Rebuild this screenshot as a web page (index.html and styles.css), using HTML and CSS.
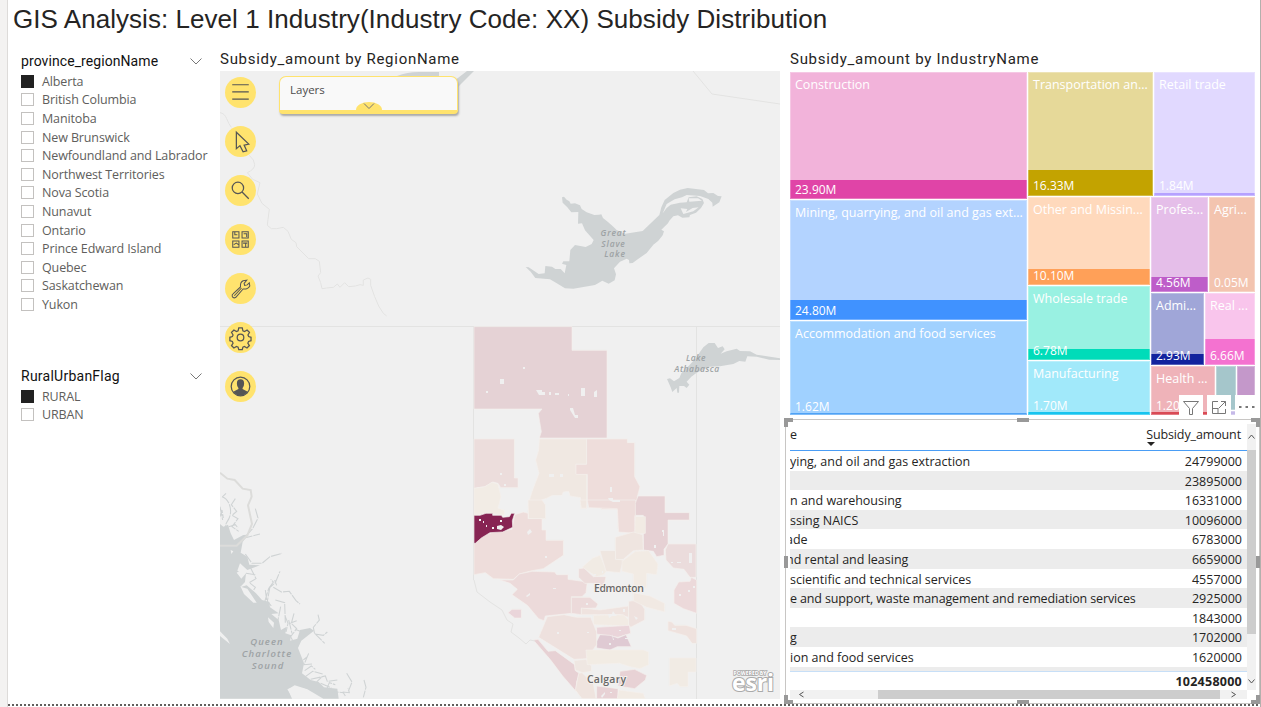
FILE: index.html
```html
<!DOCTYPE html>
<html lang="en">
<head>
<meta charset="utf-8">
<title>GIS Analysis</title>
<link rel="stylesheet" href="styles.css">
</head>
<body>
<div class="report">
<h1 class="report-title">GIS Analysis: Level 1 Industry(Industry Code: XX) Subsidy Distribution</h1>
<div class="columns">
<aside class="slicers">
  <section class="slicer slicer-province">
    <header class="slicer-head"><span class="prov-label">province_regionName</span><svg class="chev" viewBox="0 0 12 7"><path d="M.5.5 6 6 11.5.5"/></svg></header>
    <ul class="options">
      <li><i class="box on"></i>Alberta</li><li><i class="box"></i>British Columbia</li><li><i class="box"></i>Manitoba</li><li><i class="box"></i>New Brunswick</li><li><i class="box"></i>Newfoundland and Labrador</li><li><i class="box"></i>Northwest Territories</li><li><i class="box"></i>Nova Scotia</li><li><i class="box"></i>Nunavut</li><li><i class="box"></i>Ontario</li><li><i class="box"></i>Prince Edward Island</li><li><i class="box"></i>Quebec</li><li><i class="box"></i>Saskatchewan</li><li><i class="box"></i>Yukon</li>
    </ul>
  </section>
  <section class="slicer">
    <header class="slicer-head"><span class="flag-label">RuralUrbanFlag</span><svg class="chev" viewBox="0 0 12 7"><path d="M.5.5 6 6 11.5.5"/></svg></header>
    <ul class="options"><li><i class="box on"></i>RURAL</li><li><i class="box"></i>URBAN</li></ul>
  </section>
</aside>

<section class="map-visual">
  <h2 class="visual-title">Subsidy_amount by RegionName</h2>
  <div class="map">
    <svg class="map-canvas" viewBox="220 71 560 628">
      <!-- provincial borders -->
      <g class="border">
        <path d="M220 326.5H780M473.5 326V580M696.500 326V699"/>
        <path d="M693 71 712 94 780 104"/>
        <g transform="translate(210 60) scale(.33333)"><path d="M30 158q14 2 20 18t14 26M118 286q16 14 16 28t-22 24q8 10 16 20l22 10-8 34 14 28 22 18-4 30-2 18 12 10h16l20-4 14 12 10 24 14 10 2 12 36 36h20l12 8 4 34-8 10 8 20 4 18 14-2 20-2 12-10 8 10 14-14 12 12 20-2 14-4 10 2v-16l14-6 8 4v18l12 34 12 28 14 22 10 8"/></g>
      </g>
      <!-- northern lakes -->
      <path class="water" d="M397 76q10-4 22-4h20v8h-42ZM467 71h7l-16 16-4-6Z"/>
      <g transform="translate(500 60) scale(.33333)">
        <path class="water" d="M186 412 192 410 200 419 208 424 212 431 225 430 240 436 245 447 260 457 283 465 297 464 304 463 309 474 324 486 340 500 350 510 376 521 428 513 478 465 484 442 494 420 520 399 540 389 563 384 612 390 624 400 640 399 654 408 665 409 658 427 638 440 637 428 625 417 600 408 560 405 546 412 524 418 500 432 488 460 500 444 512 434 540 428 560 427 566 412 590 409 607 417 612 429 603 444 588 458 570 465 568 472 547 473 534 466 520 469 508 482 504 490 484 509 492 514 488 526 475 542 460 554 440 579 410 600 398 609 388 610 387 600 380 596 360 605 342 625 348 643 344 661 326 671 307 662 285 675 220 686 195 685 174 672 150 658 106 654 92 635 77 621 86 622 116 642 134 640 136 618 156 620 166 627 182 627 194 640 199 615 186 611 190 604 208 604 211 570 225 555 257 561 275 552 281 540 255 511 246 490 234 491 235 456 214 457 202 442 188 428Z"/>
        <path class="lakehole" d="m566 415 28 0 12 7-38 3ZM542 445l20 2-4 9 20-12 18-2-16 12-30 8Z"/>
      </g>
      <g transform="translate(470 320) scale(.33333)"><path class="water" d="M591 177 600 175 612 184 628 174 634 160 658 136 678 114 690 96 700 82 716 69 734 69 744 84 758 79 764 88 752 101 770 94 800 86 810 93 840 94 860 104 930 115V120L898 119 860 110 832 109 826 125 808 123 790 132 750 139 718 140 680 158 664 170 650 185 658 194 650 204 642 198 628 198 627 218 622 218 620 204 607 216 602 202Z"/></g>
      <!-- Pacific coast -->
      <g transform="translate(210 400) scale(.33333)">
        <path class="water" d="M30 372 40 380 54 374 62 400 72 420 100 405 114 404 98 426 92 458 112 470 118 494 150 496 112 510 90 490 82 512 108 520 105 546 90 562 110 556 138 580 156 600 178 606 180 622 206 640 184 642 206 660 213 690 230 680 226 700 244 706 240 722 262 716 270 690 300 684 312 692 274 722 264 744 282 790 276 820 302 840 326 846 342 862 382 866 386 896H340L292 868 254 856 234 868 246 896H30Z"/>
        <path class="inlet" d="M36 290q18 6 24 30t-8 44 8 40M30 350l6-20 4 24M48 280l-10 10M76 296l-12 18 16 20-14 12 18 10-18 24 20 14M56 380l20-6 8 10M136 326l8 28-16 32-26 28 48-12M30 320l8 40M106 462l20 28 30 0 24-20 36-10M120 500l18 36-20 12 18 14-12 20M108 520l28 4M164 606l12-40 20-18 14-34M176 566l14-20-8-8M170 600l-4-30M200 556l-6-16M190 562l24 14 24-2 20 28 12 10M180 560l-8 44 12 14M196 600l28 8 2 60M212 620l-8 40M252 640l-8 30 16 16-18 24 12 24M236 660l10 40M226 650l8 20-6 26M240 670l20-8M256 688l14 6M324 644l4 16-18 22 4 20 26 4 12-10M314 700l30 30M296 760l-14 34 24-2M280 780l12-10M284 812l20-14 12 10M286 830l22-16 30 8M302 838l44-10 6 16 30-4M320 846l14-14M332 850l32 14M350 868l8-20 18 6M410 820l16 26-10 26M398 876l20 2-4-14M462 840l6 22-8 30M356 874l44 4 6 10"/>
        <path class="island" d="M92 560l20 6 28 42-10 0-28-26ZM80 518l16-10 12 12-14 16ZM174 652l18 16-2 16-14-18ZM232 868l20-8 38 8 30 28h-70ZM30 694l22 22 8 16-30-24ZM62 450l8 4-6 8Z"/>
        <path class="coast" d="M30 218 52 236 74 240 98 266 122 270 125 290 114 316 126 372 112 406 80 437H30"/>
      </g>
      <!-- census divisions, north -->
      <g class="regions" transform="translate(470 320) scale(.33333)">
        <path fill="#e5d2d5" d="M12 20H306V91H411V354H208L214 335 208 300 205 280 216 267H12Z"/>
        <path fill="#ecdddc" d="M12 357H133V474H144V503H92L84 490 68 486 45 500 12 505Z"/>
        <path fill="#f2ece5" d="M12 505 45 500 66 487 84 492 93 530 84 565 104 571 102 586 72 582 58 578 12 586Z"/>
        <path fill="#f0e8e2" d="M208 357H350V432H318V462H350V566H332V533L300 528 296 514 280 516 276 526 248 526 230 535 214 540 224 560 226 596 206 600 176 595 174 555 186 515 207 460 197 420 206 390Z"/>
        <path fill="#eedddb" d="M350 357H472V368H494V470L510 500 502 530 508 554 496 570 500 640 480 634 444 625V568H394V546H352V463H318V433H350Z"/>
      </g>
      <!-- census divisions, central and south -->
      <g class="regions" transform="translate(460 500) scale(.33333)">
        <path fill="#f0e7e1" d="M204 0H246L256 14V55H206ZM360 0H380V24H364Z"/>
        <path fill="#eedddb" d="M382 0H526L536 20 524 50 526 100 476 96 472 26 386 23Z"/>
        <path fill="#e6d1d4" d="M534-12H615V38H688V60H624V132L612 148V166L590 170 580 154 550 150V46H526V10Z"/>
        <path fill="#ebdcdc" d="M624 132H708V232H690L672 208 640 204 618 180 616 150Z"/>
        <path fill="#f2ebe4" d="M526 50H556V100L524 104Z"/>
        <path fill="#efe5e0" d="M466 112 520 96 548 104 550 150 520 152 490 178H466Z"/>
        <path fill="#eedddb" d="M42 132 60 110 96 98 156 88 164 44 190 36 204 40V56H246V90H258V121H310V166L250 206 216 212 178 222 160 238 100 236 76 218 42 224Z"/>
        <path fill="#872453" d="M42 46H60L78 40H98V46H124L128 52 148 50 154 40 164 40 157 62 158 82 128 96 90 98 64 114 46 130H42Z"/>
        <path fill="#ecdada" d="M120 240 160 240 178 222 216 214 284 216 290 224H324V238L382 246 378 278 366 290 334 290V340L256 348 252 362 236 356 202 316 156 284 172 268 150 250Z"/>
        <path fill="#f1ebe4" d="M366 202 398 174 420 166 440 212 432 224 410 230Z"/><path fill="#efe6e0" d="M420 152H466V178L490 180 480 218 438 214Z"/><path fill="#f2ebe4" d="M486 184 526 154 566 152 594 192 590 224 560 220V264L520 262V222L486 214Z"/>
        <path fill="#ecdcdb" d="M356 206 372 204 400 230 438 230 430 266 400 250H374L356 232Z"/>
        <path fill="#ecdada" d="M334 292 390 292 414 312 408 324 364 326V344L334 340Z"/><path fill="#efe3df" d="M364 324 420 330 506 318V352L480 344H364Z"/>
        <path fill="#eee1de" d="M506 304 536 300 554 328V360L512 382 506 374Z"/><path fill="#f2ebe4" d="M400 346 490 344 506 360V378L400 374Z"/><path fill="#f1e9e3" d="M520 278 570 288 614 310V336L560 322 520 302Z"/>
        <path fill="#ecd9da" d="M642 270 656 246 690 244 694 232 710 240V340L670 326 642 310Z"/>
        <path fill="#efe2de" d="M624 364 636 366 644 376H678L710 386V430H696L680 408 624 392Z"/>
        <path fill="#ead5da" d="M410 382 508 376 512 400 474 412 410 402Z"/><path fill="#dfcad3" d="M410 424 420 404 450 406 474 414 498 404 514 440 472 440 450 450 410 444Z"/>
        <path fill="#ead5da" d="M144 338 156 328 184 328V354H164Z"/>
        <path fill="#eee1de" d="M236 412 262 350 312 344 350 352 392 352 410 396V434L380 476 342 478Z"/>
        <path fill="#e7d1d4" d="M220 420 234 418 264 454 286 452 344 494 346 512 358 520 350 546 348 574 308 528 272 480Z"/>
        <path fill="#efe7e2" d="M342 482 378 478 394 498V514L368 518 346 510Z"/><path fill="#f2ece4" d="M378 450H550L566 456V494L540 506 510 500 478 490 382 494Z"/>
        <path fill="#e8d2d5" d="M480 514 524 508 560 526 556 540 524 566 474 558Z"/><path fill="#f1ebe4" d="M628 474H708V516H684V560H660L652 550 628 558Z"/>
        <path fill="#efe4df" d="M356 520 366 518 400 550 408 596H366L346 570Z"/><path fill="#e8d2d5" d="M410 558 474 566V596H410Z"/><path fill="#f2ebe4" d="M476 570 550 580 556 596H472Z"/>
      </g>
      <!-- enclaves inside the divisions -->
      <path class="enclave" d="M500 379h4v5h-4ZM523 367h2v2h-2ZM536 390h6v2h3v3h-6ZM549 392h2v3h-2ZM555 393h4v2h-4ZM568 394h1v2h-1ZM581 388h4v8h-4ZM594 392l3-2v7h-3ZM570 408h3l2 7h3v3h-3l-5-8ZM549 474h5v3h-5ZM560 474h3v3h-3ZM608 498h5v2h7v2h-7l-4-2ZM610 487h2v5h-2ZM486 391h2v2h-2ZM500 473h2v2h-2ZM504 484h2v2h-2ZM479 519h2v2h-2ZM483 521h1v2h-1ZM486 525h1v2h-1ZM492 527h2v2h-2ZM500 520h2v2h-2ZM497 526l4-1 3 2-3 3-4-1ZM527 532l3-3 2 3-4 3ZM545 556h2v2h-2ZM553 588h3v1h-3ZM526 596l4-3v2l-3 2ZM662 530h2v6h-1v-4h-1ZM654 545h2v3h-2ZM689 553h3v10h-3ZM671 562h2v1h-2ZM677 562h4v1h-4ZM687 579h2v2h-2ZM688 590h2v2h-2ZM693 586h2v2h-2ZM679 594h2v2h-2ZM602 571h1v2h-1ZM607 576h2v2h-2ZM594 574h2v1h-2ZM586 603h2v2h-2ZM608 614h4l1-3 2 3 2 2h-5l-3 2ZM634 616l4 2-2 2ZM619 630h2v1h-2ZM609 643h2v2h-2ZM625 638h3v1h-3ZM612 634l2 6h-1ZM587 632h2v1h-2ZM557 632h2v2h-2ZM623 609h2v3h-2ZM672 628h4v2h-4ZM601 696l4-4v2l-3 4ZM610 692h2v1h-2Z"/>
      <path class="border" d="M474 580l3 12 13 10 12 8 5 10 6 4-2 8 8 6 7 6 4-4 5 1"/>
      <g class="lake-label"><text x="613.500" y="236">Great</text><text x="613.500" y="247">Slave</text><text x="615" y="257">Lake</text></g>
      <g class="lake-label lake-small"><text x="696" y="361">Lake</text><text x="697" y="372">Athabasca</text></g>
      <g class="lake-label sea-label"><text x="267" y="645">Queen</text><text x="267" y="657">Charlotte</text><text x="268" y="669">Sound</text></g>
      <g class="city"><text x="619" y="592" textLength="50">Edmonton</text><text x="606.500" y="683" textLength="39">Calgary</text></g>
      <g class="esri"><text class="powered" x="750" y="675" textLength="33">POWERED BY</text><text class="brand" x="753" y="691" textLength="42">esri</text></g>
    </svg>
    <nav class="tools">
      <span class="tool"><svg viewBox="0 0 30 30"><path d="M7 7.500H23M7 14.500H23M7 21.500H23"/></svg></span>
      <span class="tool"><svg viewBox="0 0 30 30"><path d="M11 6V22L14.500 19 17.500 25 21 24 18.500 18.500 23 17.500Z"/></svg></span>
      <span class="tool"><svg viewBox="0 0 30 30"><circle cx="12.500" cy="12.500" r="5.500"/><path d="M16.500 16.500 23 23"/></svg></span>
      <span class="tool"><svg class="thin" viewBox="0 0 30 30"><path d="M7.500 7.500h6v6h-6ZM16.500 7.500h6v6h-6ZM7.500 16.500h6v6h-6ZM16.500 16.500h6v6h-6ZM9.500 8v2.500h2.500M18 9.500h3v3M8.500 20l2.500-1.500 2 1.500M17.500 18.500h4M20 19v3"/></svg></span>
      <span class="tool"><svg class="thin" viewBox="0 0 30 30"><path d="M17.500 15.500 10.500 23.500Q8 25 7 22.500 6.500 21 8 20L15 13.500Q14.500 9 17.500 7.500L21 7 18.500 10 19 12 21.500 11.500 23.500 9.500 24 12.500Q22 16 17.500 15.500ZM9 22 16 14.500"/></svg></span>
      <span class="tool"><svg viewBox="0 0 30 30"><circle cx="15" cy="15" r="3.200"/><path d="M13.300 5.800h3.400l.6 2.800 1.600.7 2.500-1.500 2.300 2.300-1.500 2.500.7 1.500 2.300.7v3.300l-2.400.7-.7 1.600 1.500 2.400-2.300 2.300-2.500-1.500-1.500.7-.6 2.500h-3.400l-.6-2.500-1.600-.7-2.500 1.500-2.300-2.300 1.500-2.400-.7-1.600-2.400-.7v-3.300l2.400-.7.7-1.500-1.500-2.500 2.300-2.300 2.500 1.500 1.600-.7Z"/></svg></span>
      <span class="tool"><svg viewBox="0 0 30 30"><circle cx="15" cy="15" r="9"/><path class="solid" d="M11.500 12q0-4 3.500-4t3.500 4q0 3-1.500 4.500v1l5 2.500Q19 24 15 24t-7-4l5-2.500v-1q-1.500-1.500-1.500-4.500Z"/></svg></span>
    </nav>
    <div class="layers"><span>Layers</span><i class="tab"><svg viewBox="0 0 12 7"><path d="M1 .5 6 5.500 11 .5"/></svg></i></div>
  </div>
</section>

<div class="right">
<section class="tree-visual">
  <h2 class="visual-title industry">Subsidy_amount by IndustryName</h2>
  <div class="treemap">
    <div class="tcol main">
      <div class="tile construction"><span>Construction</span><b>23.90M</b></div>
      <div class="tile mining"><span>Mining, quarrying, and oil and gas ext...</span><b>24.80M</b></div>
      <div class="tile food"><span>Accommodation and food services</span><b>1.62M</b></div>
    </div>
    <div class="tcol rest">
      <div class="trow top">
        <div class="tile transport"><span>Transportation an...</span><b>16.33M</b></div>
        <div class="tile retail"><span>Retail trade</span><b>1.84M</b></div>
      </div>
      <div class="trow lower">
        <div class="tcol mid">
          <div class="tile other"><span>Other and Missin...</span><b>10.10M</b></div>
          <div class="tile wholesale"><span>Wholesale trade</span><b>6.78M</b></div>
          <div class="tile manuf"><span>Manufacturing</span><b>1.70M</b></div>
        </div>
        <div class="tcol small">
          <div class="trow sa"><div class="tile prof"><span>Profes...</span><b>4.56M</b></div><div class="tile agri"><span>Agri...</span><b>0.05M</b></div></div>
          <div class="trow sb"><div class="tile admin"><span>Admi...</span><b>2.93M</b></div><div class="tile real"><span>Real ...</span><b>6.66M</b></div></div>
          <div class="trow sc"><div class="tile health"><span>Health ...</span><b>1.20M</b></div><div class="tcol tiny"><div class="tile teal"></div><div class="tile lav"></div></div><div class="tile plum"></div></div>
        </div>
      </div>
    </div>
    <div class="actions">
      <span><svg viewBox="0 0 24 24"><path d="M4.500 6.500h15l-6 7v6h-3v-6Z"/></svg></span>
      <span><svg viewBox="0 0 24 24"><path d="M11 6.500H5.500v12h13V14M5.500 13.500h5.500v5M14 6.500h4.500V11M11.500 13.500l7-7"/></svg></span>
      <span><svg viewBox="0 0 24 24"><path class="dots" d="M4 11h2.500v2H4ZM10.500 11H13v2h-2.500ZM17 11h2.500v2H17Z"/></svg></span>
    </div>
  </div>
</section>
<section class="table-visual">
  <i class="handle tl"></i><i class="handle tc"></i><i class="handle tr"></i><i class="handle ml"></i><i class="handle mr"></i><i class="handle bl"></i><i class="handle bc"></i><i class="handle br"></i>
  <div class="grid">
    <div class="thead"><span>e</span><span class="sorted">Subsidy_amount</span></div>
    <div class="tbody">
      <div class="r"><span>ying, and oil and gas extraction</span><span>24799000</span></div>
      <div class="r"><span></span><span>23895000</span></div>
      <div class="r"><span>n and warehousing</span><span>16331000</span></div>
      <div class="r"><span>ssing NAICS</span><span>10096000</span></div>
      <div class="r"><span class="cut">ade</span><span>6783000</span></div>
      <div class="r"><span class="cut">nd rental and leasing</span><span>6659000</span></div>
      <div class="r"><span>scientific and technical services</span><span>4557000</span></div>
      <div class="r"><span class="long">e and support, waste management and remediation services</span><span>2925000</span></div>
      <div class="r"><span></span><span>1843000</span></div>
      <div class="r"><span>g</span><span>1702000</span></div>
      <div class="r"><span>ion and food services</span><span>1620000</span></div>
      <div class="r"></div>
    </div>
    <div class="total">102458000</div>
  </div>
  <div class="vbar"><svg viewBox="0 0 9 9"><path d="M1.500 6.500 4.500 3l3 3.500"/></svg><i></i><svg viewBox="0 0 9 9"><path d="M1.500 2.500 4.500 6l3-3.500"/></svg></div>
  <div class="hbar"><svg viewBox="0 0 9 9"><path d="M6.500 2 2.500 4.500l4 2.500"/></svg><i></i><svg viewBox="0 0 9 9"><path d="M2.500 2l4 2.500-4 2.500"/></svg></div>
</section>
</div>
</div>
</div>
</body>
</html>
```
FILE: styles.css
```css
* { box-sizing: border-box; }
body { margin: 0; width: 1261px; height: 707px; overflow: hidden; background: #fff; font-family: "Open Sans", "Noto Sans", sans-serif; color: #252423; }
h1, h2, ul { margin: 0; padding: 0; font-weight: 400; list-style: none; }
svg { display: block; fill: none; }
.report { position: relative; width: 1261px; height: 707px; border-left: 7px solid #f3f2f1; border-right: 1px solid #b3b0ad; box-shadow: inset 1px 0 #dddbd9; }
.report::after { content: ""; position: absolute; left: 1px; right: 0; top: 704px; height: 2px; background: repeating-linear-gradient(90deg, #605e5c 0 2px, #fff 2px 4px); }
.report-title { height: 48px; padding: 3px 0 0 6px; font: 26px/32px "Liberation Sans", Arial, sans-serif; letter-spacing: .05px; white-space: nowrap; }
.columns { display: flex; }

.slicers { width: 213px; padding: 3px 0 0 14px; }
.slicer-province { height: 315px; }
.slicer-head { display: flex; align-items: center; justify-content: space-between; width: 181px; height: 21px; font: 400 14px/21px Roboto, sans-serif; color: #111; }
.prov-label { letter-spacing: .08px; }
.flag-label { letter-spacing: .25px; }
.chev { width: 12px; height: 7px; stroke: #777; }
.options li { display: flex; align-items: center; height: 18.600px; font-size: 12.500px; letter-spacing: -.12px; color: #605e5c; white-space: nowrap; }
.box { width: 13px; height: 13px; margin-right: 8px; border: 1px solid #c3c1bf; }
.box.on { background: #212121; border-color: #212121; }

.map-visual { width: 560px; }
.visual-title { height: 23px; font: 15px/22px Roboto, sans-serif; letter-spacing: .72px; white-space: nowrap; }
.map { position: relative; width: 560px; height: 628px; background: #f0f0f0; }
.map-canvas { width: 560px; height: 628px; }
.border { stroke: #e3e3e2; stroke-width: 1; }
.border g { stroke-width: 3; }
.border g path { stroke-width: 3; }
.water { fill: #cfd3d4; }
.lakehole, .island, .enclave { fill: #f0f0f0; }
.inlet { stroke: #cfd3d4; stroke-width: 3.200; stroke-dasharray: 30 3; }
.coast { stroke: #dcdcda; stroke-width: 6; }
.regions path { stroke: #f4f0ed; stroke-width: 2; }
.lake-label { font: italic 600 8.500px "Open Sans", sans-serif; letter-spacing: .8px; fill: #9da2a4; text-anchor: middle; }
.lake-small { letter-spacing: .5px; }
.sea-label { font-size: 9.500px; letter-spacing: 1.100px; }
.city { font: 600 10.500px "Open Sans", sans-serif; fill: #686868; stroke: #f4f0ee; stroke-width: 2; paint-order: stroke; text-anchor: middle; }
.esri { fill: #fff; stroke: #aaa; stroke-width: 2; paint-order: stroke; text-anchor: middle; font-family: "Open Sans", sans-serif; font-weight: 700; }
.powered { font-size: 5.500px; stroke-width: 1.500; }
.brand { font-size: 23px; }
.tools { position: absolute; left: 5px; top: 5.500px; display: grid; gap: 18px; }
.tool { width: 31px; height: 31px; border-radius: 50%; background: #ffe36e; }
.tool svg { width: 31px; height: 31px; stroke: #555; stroke-width: 1.200; }
.tool .thin { stroke-width: 1; }
.tool .solid { fill: #555; stroke: none; }
.layers { position: absolute; left: 59px; top: 5px; width: 179px; height: 38px; padding: 4px 10px; border: 1px solid #ffe36e; border-bottom-width: 4px; border-radius: 7px 7px 4px 4px; background: #f9f9f9; box-shadow: 1px 2px 2px #aaa; font-size: 11.500px; line-height: 17px; color: #4c4c4c; }
.tab { position: absolute; left: 76px; bottom: 0; width: 26px; height: 8px; border-radius: 13px 13px 0 0 / 8px 8px 0 0; background: #ffe36e; }
.tab svg { width: 12px; height: 7px; margin: 1px 7px; stroke: #777; }

.right { width: 473px; padding-left: 5px; }
.tree-visual { height: 371px; padding-left: 5px; }
.industry { height: 24px; }
.treemap { position: relative; display: flex; gap: 1px; width: 465px; height: 343px; }
.tcol { display: flex; flex-direction: column; gap: 1px; }
.trow { display: flex; gap: 1px; }
.main { width: 237px; }
.rest { width: 227px; }
.top { height: 124px; }
.lower { height: 218px; }
.mid { width: 122px; }
.small { width: 104px; }
.tile { --bar: transparent; --h: 0px; display: flex; flex-direction: column; justify-content: space-between; padding: 4px 4px 1px 5px; color: #fff; font-size: 12.500px; line-height: 18px; white-space: nowrap; overflow: hidden; background: linear-gradient(var(--bar), var(--bar)) bottom / 100% var(--h) no-repeat var(--fill); box-shadow: inset 0 0 0 1px rgba(255, 255, 255, .28); }
.tile b { font-weight: 400; font-size: 12px; line-height: 16px; }
.construction { height: 127px; --fill: #f2b3da; --bar: #e044a7; --h: 19px; }
.mining { height: 120px; --fill: #b3d3ff; --bar: #4092ff; --h: 20px; }
.food { height: 94px; padding-bottom: 0; --fill: #a0d1ff; --bar: #4fa2f5; --h: 2px; }
.transport { width: 125px; padding-bottom: 2px; --fill: #e6d999; --bar: #c3a300; --h: 26px; }
.retail { width: 101px; padding-bottom: 2px; --fill: #e1d9ff; --bar: #b5a1ff; --h: 3px; }
.other { height: 88px; --fill: #ffd9bc; --bar: #ffa058; --h: 16px; }
.wholesale { height: 74px; --fill: #99f1e2; --bar: #00dcb9; --h: 11px; }
.manuf { height: 54px; --fill: #a1e9fa; --bar: #17c4ef; --h: 3px; }
.sa { height: 95px; }
.sb { height: 72px; }
.sc { height: 49px; }
.prof { width: 57px; --fill: #e5bee9; --bar: #be5dc9; --h: 15px; }
.agri { width: 46px; --fill: #f3c4af; }
.admin { width: 53px; --fill: #a0a6d8; --bar: #12239e; --h: 11px; }
.real { width: 50px; --fill: #f9c5ec; --bar: #f472d0; --h: 26px; }
.health { width: 64px; --fill: #efb3b9; --bar: #d94a55; --h: 3px; }
.tiny { width: 20px; }
.teal { height: 44px; --fill: #a5c6cb; }
.lav { height: 4px; padding: 0; --fill: #c5b9e8; }
.plum { width: 18px; --fill: #c498ca; }
.actions { position: absolute; right: -4px; top: 323px; display: flex; gap: 4px; }
.actions span { width: 24px; height: 24px; background: #fff; }
.actions svg { width: 24px; height: 24px; stroke: #777; }
.actions .dots { fill: #777; stroke: none; }

.table-visual { position: relative; display: grid; grid-template-columns: 457px 9px; grid-template-rows: 266px 9px; width: 475px; height: 285px; padding: 4px 0 0 4px; border: 1px solid #c8c6c4; }
.grid { overflow: hidden; font-size: 12.500px; color: #252423; }
.thead { display: flex; justify-content: space-between; height: 27px; padding-right: 6px; line-height: 21px; border-bottom: 1px solid #4a9df5; }
.sorted { position: relative; letter-spacing: -.12px; }
.sorted::after { content: ""; position: absolute; left: 1px; top: 18px; border: 4px solid transparent; border-top-color: #252423; border-bottom: 0; }
.tbody { height: 221px; overflow: hidden; border-bottom: 1px solid #c7dff7; }
.r { display: flex; justify-content: space-between; height: 19.600px; padding: 1px 5px 0 0; line-height: 20px; white-space: nowrap; }
.r:nth-child(even) { background: #ececec; }
.long { letter-spacing: -.13px; }
.cut { margin-left: -4px; }
.total { padding-right: 5px; line-height: 20px; text-align: right; font-weight: 700; letter-spacing: .25px; }
.vbar { display: flex; flex-direction: column; background: #f1f1f1; padding: 8px 0 4px; }
.vbar svg, .hbar svg { width: 9px; height: 9px; stroke: #555; flex: none; }
.vbar i { height: 185px; margin: 9px 0 43px; background: #cdcdcd; }
.hbar { display: flex; background: #f1f1f1; padding-left: 7px; }
.hbar i { width: 342px; margin: 0 9px 0 72px; background: #cdcdcd; }
.handle { position: absolute; background: #999; }
.tl, .tr, .bl, .br { width: 9px; height: 9px; background: none; border: 0 solid #999; }
.tl { left: -2px; top: -2px; border-width: 4px 0 0 4px; }
.tr { right: -1px; top: -2px; border-width: 4px 4px 0 0; }
.bl { left: -2px; bottom: -1px; border-width: 0 0 4px 4px; }
.br { right: -1px; bottom: -1px; border-width: 0 4px 4px 0; }
.tc, .bc { left: 231px; width: 12px; height: 4px; }
.tc { top: -2px; }
.bc { bottom: -1px; }
.ml, .mr { top: 136px; width: 4px; height: 12px; }
.ml { left: -2px; }
.mr { right: -1px; }
```
